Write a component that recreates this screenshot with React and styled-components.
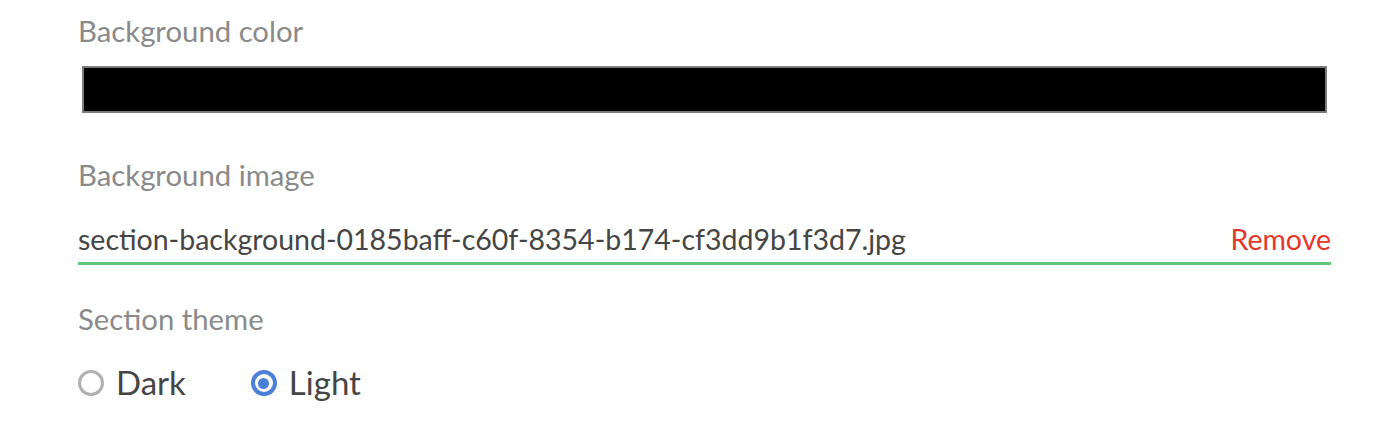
import React from 'react';
import styled, { createGlobalStyle } from 'styled-components';

const Global = createGlobalStyle`
  body {
    margin: 0;
    background: #fff;
    font-family: Lato, "Noto Sans", sans-serif;
  }
`;

const Panel = styled.div`
  width: 1253px;
  padding: 13px 0 0 78px;
  display: flex;
  flex-direction: column;
`;

const Field = styled.div`
  display: flex;
  flex-direction: column;
  margin-bottom: ${(p) => p.gap || 0}px;
`;

const Label = styled.div`
  font-size: 29.3px;
  line-height: 36px;
  color: #8a8a8a;
  margin-bottom: ${(p) => p.space || 17}px;
`;

const Swatch = styled.div`
  box-sizing: border-box;
  margin-left: 4px;
  width: 1245px;
  height: 47px;
  background: ${(p) => p.color};
  border: 2px solid #7c7c7c;
`;

const FileRow = styled.div`
  display: flex;
  justify-content: space-between;
  align-items: baseline;
  padding-bottom: 6px;
  border-bottom: 3px solid #63c77a;
`;

const FileName = styled.span`
  font-size: 28.5px;
  line-height: 34px;
  color: #454545;
`;

const RemoveButton = styled.button`
  border: 0;
  background: none;
  padding: 0;
  font: inherit;
  font-size: 28.5px;
  line-height: 34px;
  color: #e4372b;
  cursor: pointer;
`;

const Radios = styled.div`
  display: flex;
  gap: 65px;
`;

const Option = styled.label`
  display: flex;
  align-items: center;
  gap: 12px;
  font-size: 33px;
  line-height: 40px;
  color: #454545;
`;

const Dot = styled.span`
  box-sizing: border-box;
  width: 26px;
  height: 26px;
  margin-top: 2px;
  border-radius: 50%;
  border: ${(p) => (p.checked ? '4px solid #4c80d6' : '3px solid #b0b0b0')};
  display: flex;
  align-items: center;
  justify-content: center;

  &::after {
    content: '';
    width: 11px;
    height: 11px;
    border-radius: 50%;
    background: ${(p) => (p.checked ? '#4c80d6' : 'transparent')};
  }
`;

export default function App() {
  const theme = 'light';

  return (
    <>
      <Global />
      <Panel>
        <Field gap={44}>
          <Label>Background color</Label>
          <Swatch color="#000" />
        </Field>
        <Field gap={36}>
          <Label space={29}>Background image</Label>
          <FileRow>
            <FileName>section-background-0185baff-c60f-8354-b174-cf3dd9b1f3d7.jpg</FileName>
            <RemoveButton>Remove</RemoveButton>
          </FileRow>
        </Field>
        <Field>
          <Label space={25}>Section theme</Label>
          <Radios>
            <Option>
              <Dot checked={theme === 'dark'} />
              Dark
            </Option>
            <Option>
              <Dot checked={theme === 'light'} />
              Light
            </Option>
          </Radios>
        </Field>
      </Panel>
    </>
  );
}
